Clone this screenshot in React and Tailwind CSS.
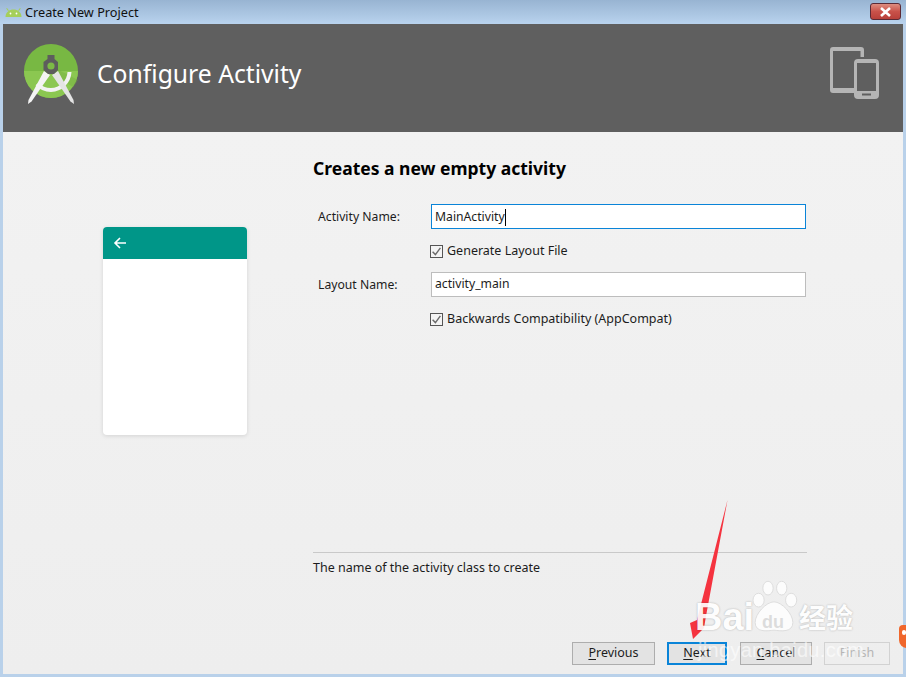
import React from "react";

function AndroidHead() {
  return (
    <svg width="17" height="11" viewBox="0 0 17 11" className="shrink-0">
      <path d="M0.5 10 C0.5 5 4.5 2.5 8.5 2.5 C12.5 2.5 16.5 5 16.5 10 Z" fill="#a5cf5a" />
      <path d="M3.5 3.8 L1.6 1.2 M13.5 3.8 L15.4 1.2" stroke="#a5cf5a" strokeWidth="1.1" />
      <circle cx="5.5" cy="6.5" r="0.9" fill="#fff" />
      <circle cx="11.5" cy="6.5" r="0.9" fill="#fff" />
    </svg>
  );
}

function Logo() {
  return (
    <svg width="58" height="62" viewBox="0 0 58 62" className="shrink-0">
      <circle cx="28" cy="27" r="27" fill="#78b843" />
      <path d="M1 27 H55 A27 27 0 0 1 1 27 Z" fill="#8bc751" />
      <path d="M28 22 L55 36 A27 27 0 0 1 50 43 L28 30 Z" fill="#6fa83c" opacity="0.35" />
      <path d="M46.5 28 A19 19 0 0 1 28 46 A19 19 0 0 1 14 40" fill="none" stroke="#f2f2f2" strokeWidth="4" />
      <path d="M21 27 L5.5 56 L5 60 L8.5 57.5 L27 31 Z" fill="#f4f4f4" />
      <path d="M35 27 L50.5 56 L51 60 L47.5 57.5 L29 31 Z" fill="#e4e4e4" />
      <path d="M24.5 11 H31.5 V15 L35 18 V26 L31 30 H25 L20.5 26 V18 L24.5 15 Z" fill="#5d5d5d" />
      <circle cx="28" cy="22" r="3.6" fill="#7cba46" />
    </svg>
  );
}

function Devices() {
  return (
    <svg width="50" height="53" viewBox="0 0 50 53" className="shrink-0">
      <path d="M3 0 H31 Q34 0 34 3 V10 H30.5 Q25 10 25 15 V41 V46 H3 Q0 46 0 43 V3 Q0 0 3 0 Z M3 4 V41 H25 V15 Q25 10 30.5 10 V4 Z" fill="#b5b5b5" fillRule="evenodd" />
      <path d="M28 12 H45 Q49 12 49 16 V48 Q49 52 45 52 H28 Q24 52 24 48 V16 Q24 12 28 12 Z M27 16 V44 H46 V16 Z M32 46.5 V48.5 H41 V46.5 Z" fill="#b5b5b5" fillRule="evenodd" />
    </svg>
  );
}

function Check({ label }) {
  return (
    <div className="flex items-center ml-[117px] h-[18px] gap-[4px]">
      <span className="w-[13px] h-[13px] border border-[#555555] bg-[#f4f4f4] flex items-center justify-center shrink-0">
        <svg width="11" height="11" viewBox="0 0 11 11">
          <path d="M1.6 5.8 L4.4 8.6 L9.4 1.8" fill="none" stroke="#6a6a6a" strokeWidth="1.4" />
        </svg>
      </span>
      <span>{label}</span>
    </div>
  );
}

function Btn({ w, ml, cls, letter, rest }) {
  return (
    <button className={`h-[23px] flex items-center justify-center shrink-0 ${w} ${ml || ""} ${cls}`}>
      <span className="underline underline-offset-2 decoration-1">{letter}</span>
      <span>{rest}</span>
    </button>
  );
}

export default function App() {
  return (
    <div className="relative w-[906px] h-[677px] overflow-hidden flex flex-col bg-[#b9d1ea] px-[3px] pb-[3px] text-[12.5px] text-[#1c1c1c] font-['Noto_Sans','Open_Sans',sans-serif]">
      <div className="h-[24px] -mx-[3px] shrink-0 flex items-center pl-[5px] pr-[5px] bg-gradient-to-b from-[#98b4d2] to-[#b9d3ee]">
        <AndroidHead />
        <span className="ml-[3px] pt-[2px] text-[12.7px] text-[#111]">Create New Project</span>
        <div className="ml-auto w-[31px] h-[17px] rounded-[3px] border border-[#5b2a35] bg-gradient-to-b from-[#dd8d80] via-[#c9524a] to-[#b8403a] flex items-center justify-center mb-[1px]">
          <svg width="13" height="10" viewBox="0 0 13 10">
            <path d="M2 1 L11 9 M11 1 L2 9" stroke="#fff" strokeWidth="2.6" />
          </svg>
        </div>
      </div>

      <div className="h-[108px] shrink-0 bg-[#5f5f5f] flex items-center pl-[20px] pr-[23px]">
        <div className="-mt-[6px]"><Logo /></div>
        <div className="ml-[16px] text-[24.7px] text-white -mt-[8px]">Configure Activity</div>
        <div className="ml-auto -mt-[10px]"><Devices /></div>
      </div>

      <div className="flex-1 flex flex-col bg-gradient-to-b from-[#f2f2f2] to-[#eeeeee]">
        <div className="flex-1 flex">
          <div className="w-[310px] shrink-0 pt-[95px] pl-[100px]">
            <div className="w-[144px] h-[208px] bg-white rounded-[4px] overflow-hidden shadow-[0_1px_4px_rgba(0,0,0,0.12)]">
              <div className="h-[32px] bg-[#009688] flex items-center pl-[10px]">
                <svg width="14" height="14" viewBox="0 0 14 14">
                  <path d="M13 7 H2 M7 2 L2 7 L7 12" fill="none" stroke="#fff" strokeWidth="1.6" />
                </svg>
              </div>
            </div>
          </div>

          <div className="w-[494px] shrink-0 flex flex-col">
            <h1 className="text-[17.5px] font-bold text-black h-[28px] leading-[28px] mt-[22px]">Creates a new empty activity</h1>
            <div className="flex items-center h-[25px] mt-[22px]">
              <span className="w-[118px] pl-[5px] pt-px shrink-0 text-[12.2px]">Activity Name:</span>
              <div className="w-[375px] h-[25px] bg-white border border-[#0a84d8] flex items-center pl-[3px] pt-px text-[12.2px]">
                <span>MainActivity</span>
                <span className="w-px h-[17px] bg-black" />
              </div>
            </div>
            <div className="mt-[13px]"><Check label="Generate Layout File" /></div>
            <div className="flex items-center h-[25px] mt-[12px]">
              <span className="w-[118px] pl-[5px] pt-px shrink-0 text-[12.2px]">Layout Name:</span>
              <div className="w-[375px] h-[25px] bg-white border border-[#bdbdbd] flex items-center pl-[3px] text-[12.2px]">
                <span>activity_main</span>
              </div>
            </div>
            <div className="mt-[13px]"><Check label="Backwards Compatibility (AppCompat)" /></div>

            <div className="mt-auto border-t border-[#c9c9c9] h-[30px] pt-[6px] mb-[60px]">The name of the activity class to create</div>
          </div>
        </div>

        <div className="h-[23px] shrink-0 mb-[9px] flex items-center pl-[569px]">
          <Btn w="w-[83px]" cls="bg-[#e3e3e3] border border-[#adadad]" letter="P" rest="revious" />
          <Btn w="w-[60px]" ml="ml-[12px]" cls="bg-[#e3e3e3] border-2 border-[#0a84d8]" letter="N" rest="ext" />
          <Btn w="w-[72px]" ml="ml-[13px]" cls="bg-[#e3e3e3] border border-[#adadad]" letter="C" rest="ancel" />
          <button className="ml-[12px] w-[66px] h-[23px] border border-[#d2d2d2] text-[#b5b5b5] shrink-0">Finish</button>
        </div>
      </div>

      {/* Red annotation arrow */}
      <svg className="absolute left-[685px] top-[498px] pointer-events-none" width="46" height="146" viewBox="0 0 46 146">
        <path d="M42.5 2 L21 118 L19 130 L8 141 L5 125 L12 122 Z" fill="#f5333f" />
      </svg>

      {/* Baidu watermark */}
      <div className="absolute left-[695px] top-[598px] w-[170px] h-[66px] text-white pointer-events-none">
        <span className="absolute left-0 top-0 text-[38px] leading-[38px] font-bold opacity-90 [text-shadow:0_0_2px_rgba(0,0,0,0.3)] font-['Liberation_Sans',sans-serif]">Bai</span>
        <svg className="absolute left-[55px] -top-[18px]" width="48" height="54" viewBox="0 0 56 60">
          <g fill="#ffffff" opacity="0.85" stroke="#d6d6d6" strokeWidth="1">
            <ellipse cx="10" cy="22" rx="6.5" ry="8" />
            <ellipse cx="21" cy="8" rx="6" ry="8" />
            <ellipse cx="37" cy="8" rx="6" ry="8" />
            <ellipse cx="48" cy="22" rx="6.5" ry="8" />
            <path d="M28 24 C37 24 50 38 50 48 C50 60 36 58 28 57 C20 58 6 60 6 48 C6 38 19 24 28 24 Z" />
          </g>
        </svg>
        <span className="absolute left-[67px] top-[14px] text-[18px] leading-[20px] font-bold text-[#dcdcdc] font-['Liberation_Sans',sans-serif]">du</span>
        <span className="absolute left-[104px] top-[2px] text-[27px] leading-[34px] font-bold opacity-90 [text-shadow:0_0_2px_rgba(0,0,0,0.3)] font-['Noto_Sans_CJK_SC',sans-serif]">经验</span>
        <span className="absolute left-[3px] top-[40px] text-[20px] leading-[24px] opacity-60 font-['Liberation_Sans',sans-serif] tracking-[0.3px]">jingyan.baidu.com</span>
      </div>

      {/* Clipped orange badge at the right edge */}
      <div className="absolute left-[899px] top-[625px] w-[10px] h-[23px] bg-[#f0672c] rounded-tl-[4px] rounded-bl-[8px]">
        <span className="block w-[4px] h-[5px] mt-[5px] ml-[3px] bg-white rounded-full" />
      </div>
    </div>
  );
}
